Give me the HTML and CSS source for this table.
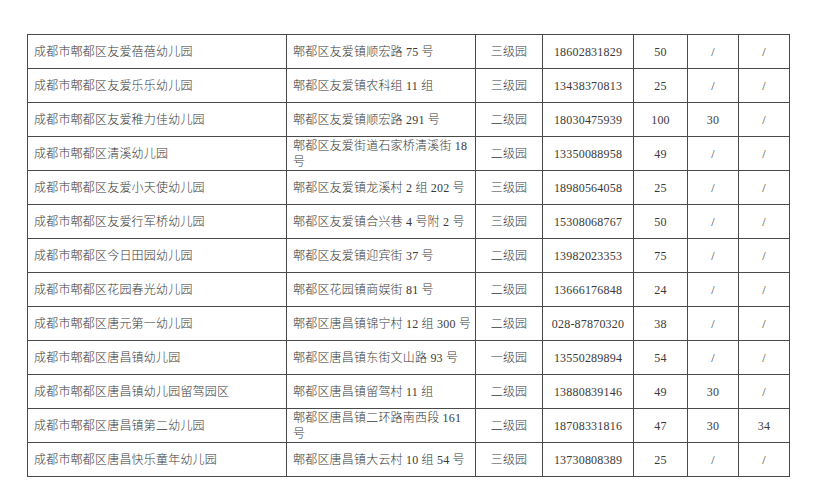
FILE: index.html
```html
<!DOCTYPE html>
<html lang="zh-CN">
<head>
<meta charset="utf-8">
<link rel="stylesheet" href="styles.css">
</head>
<body>
<table class="list">
<colgroup>
<col class="c-name"><col class="c-addr"><col class="c-level"><col class="c-phone"><col class="c-n1"><col class="c-n2"><col class="c-n3">
</colgroup>
<tbody>
<tr><td class="l">成都市郫都区友爱蓓蓓幼儿园</td><td class="l">郫都区友爱镇顺宏路 75 号</td><td>三级园</td><td>18602831829</td><td>50</td><td>/</td><td>/</td></tr>
<tr><td class="l">成都市郫都区友爱乐乐幼儿园</td><td class="l">郫都区友爱镇农科组 11 组</td><td>三级园</td><td>13438370813</td><td>25</td><td>/</td><td>/</td></tr>
<tr><td class="l">成都市郫都区友爱稚力佳幼儿园</td><td class="l">郫都区友爱镇顺宏路 291 号</td><td>二级园</td><td>18030475939</td><td>100</td><td>30</td><td>/</td></tr>
<tr><td class="l">成都市郫都区清溪幼儿园</td><td class="l">郫都区友爱街道石家桥清溪街 18<br>号</td><td>二级园</td><td>13350088958</td><td>49</td><td>/</td><td>/</td></tr>
<tr><td class="l">成都市郫都区友爱小天使幼儿园</td><td class="l">郫都区友爱镇龙溪村 2 组 202 号</td><td>三级园</td><td>18980564058</td><td>25</td><td>/</td><td>/</td></tr>
<tr><td class="l">成都市郫都区友爱行军桥幼儿园</td><td class="l">郫都区友爱镇合兴巷 4 号附 2 号</td><td>三级园</td><td>15308068767</td><td>50</td><td>/</td><td>/</td></tr>
<tr><td class="l">成都市郫都区今日田园幼儿园</td><td class="l">郫都区友爱镇迎宾街 37 号</td><td>二级园</td><td>13982023353</td><td>75</td><td>/</td><td>/</td></tr>
<tr><td class="l">成都市郫都区花园春光幼儿园</td><td class="l">郫都区花园镇商娱街 81 号</td><td>二级园</td><td>13666176848</td><td>24</td><td>/</td><td>/</td></tr>
<tr><td class="l">成都市郫都区唐元第一幼儿园</td><td class="l">郫都区唐昌镇锦宁村 12 组 300 号</td><td>二级园</td><td>028-87870320</td><td>38</td><td>/</td><td>/</td></tr>
<tr><td class="l">成都市郫都区唐昌镇幼儿园</td><td class="l">郫都区唐昌镇东街文山路 93 号</td><td>一级园</td><td>13550289894</td><td>54</td><td>/</td><td>/</td></tr>
<tr><td class="l">成都市郫都区唐昌镇幼儿园留驾园区</td><td class="l">郫都区唐昌镇留驾村 11 组</td><td>二级园</td><td>13880839146</td><td>49</td><td>30</td><td>/</td></tr>
<tr><td class="l">成都市郫都区唐昌镇第二幼儿园</td><td class="l">郫都区唐昌镇二环路南西段 161<br>号</td><td>二级园</td><td>18708331816</td><td>47</td><td>30</td><td>34</td></tr>
<tr><td class="l">成都市郫都区唐昌快乐童年幼儿园</td><td class="l">郫都区唐昌镇大云村 10 组 54 号</td><td>三级园</td><td>13730808389</td><td>25</td><td>/</td><td>/</td></tr>
</tbody>
</table>
</body>
</html>
```

FILE: styles.css
```css
html, body {
  margin: 0;
  padding: 0;
  background: #ffffff;
}
body {
  font-family: "Liberation Serif", "Noto Sans CJK SC", serif;
  color: #3a3a3a;
  font-size: 12px;
}
.list {
  margin: 34px 0 0 27px;
  border-collapse: collapse;
  table-layout: fixed;
  width: 762px;
}
.c-name { width: 259px; }
.c-addr { width: 189px; }
.c-level { width: 67px; }
.c-phone { width: 91px; }
.c-n1 { width: 54px; }
.c-n2 { width: 51px; }
.c-n3 { width: 51px; }
.list td {
  border: 1px solid #4a4a4a;
  height: 33px;
  padding: 0 4px;
  text-align: center;
  vertical-align: middle;
  line-height: 16px;
  letter-spacing: 0.2px;
  font-weight: 300;
  white-space: nowrap;
  overflow: hidden;
  box-sizing: content-box;
}
.list td.l {
  text-align: left;
  padding-left: 6px;
}
```
